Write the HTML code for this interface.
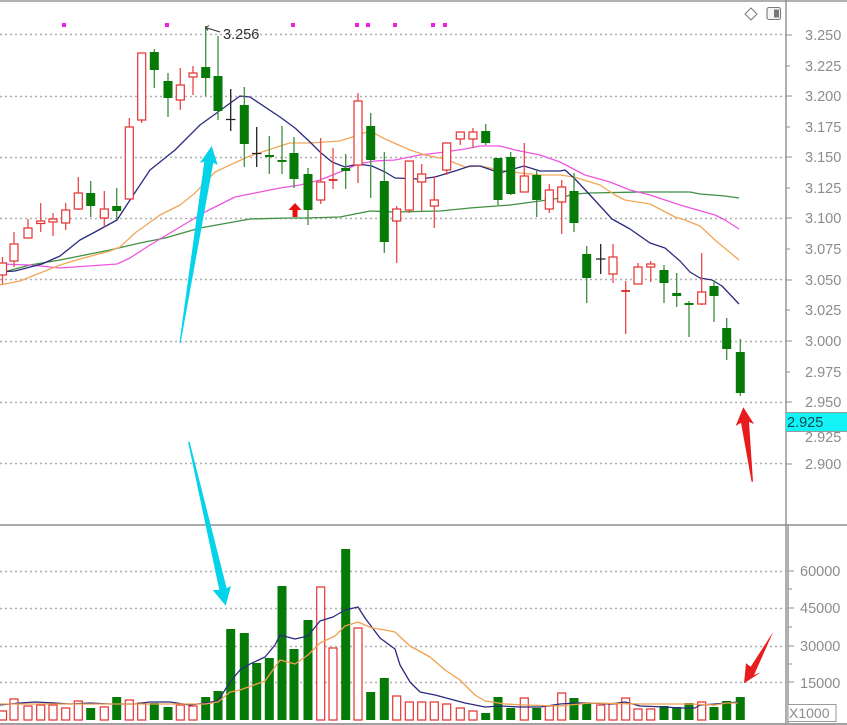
<!DOCTYPE html>
<html><head><meta charset="utf-8"><style>
html,body{margin:0;padding:0;background:#fff;width:847px;height:725px;overflow:hidden}
svg{display:block}
.b{filter:blur(.35px)}
text{font-family:"Liberation Sans",sans-serif}
.ax text{font-size:14.5px;fill:#8c8c8c}
</style></head><body>
<svg width="847" height="725" viewBox="0 0 847 725" xmlns="http://www.w3.org/2000/svg">
<rect width="847" height="725" fill="#fff"/>
<!-- grid -->
<g stroke="#aeaeae" stroke-width="1.4" stroke-dasharray="2 3" fill="none">
<path d="M0 34.5H786M0 96.5H786M0 157.5H786M0 218.5H786M0 279.5H786M0 341.5H786M0 402.5H786M0 463.5H786M0 571.5H786M0 608.5H786M0 646.5H786M0 682.5H786"/>
</g>
<g class="b">
<rect x="0" y="0" width="847" height="2" fill="#b0b0b0"/>
<!-- price MAs -->
<g fill="none" stroke-width="1.3" stroke-linejoin="round">
<polyline stroke="#3f9140" points="0,273 30,265 60,260 90,254 110,250 140,243 165,238 200,228 250,219 290,218 305,218 340,217 370,211 395,212 440,211 470,208 510,205 540,201 560,198 574,194 590,193 640,192 690,192 700,194 725,196 739,198"/>
<polyline stroke="#ee55e0" points="0,264 30,265 60,268 117,264 130,258 150,245 175,230 205,212 235,197 255,193 280,188 300,185 320,180 345,170 358,164 375,161 395,160 420,155 445,152 465,149 480,146 500,146 515,150 540,155 560,162 585,175 610,182 630,190 650,195 680,205 715,215 725,220 739,229"/>
<polyline stroke="#f2a65a" points="0,285 20,281 40,273 60,265 80,259 110,251 120,247 135,233 160,215 180,205 195,193 215,172 230,165 250,156 280,146 290,143 310,143 340,141 355,136 370,131 385,139 410,150 425,155 445,159 465,167 480,166 500,170 520,173 540,175 560,175 574,177 600,185 615,195 625,200 650,204 675,217 685,220 700,226 715,240 739,260"/>
<polyline stroke="#2a2a80" points="0,272 15,271 42,264 60,256 80,240 95,232 117,220 130,200 150,170 175,150 200,125 218,112 240,96 250,97 280,117 295,128 310,142 320,152 332,162 345,167 358,164 372,166 385,172 395,178 420,179 435,177 455,171 470,166 480,166 500,173 510,170 524,166 540,171 560,171 565,170 574,178 590,195 612,219 630,229 650,243 665,248 680,261 690,272 700,278 712,280 722,286 739,304"/>
</g>
<!-- wicks -->
<path fill="none" stroke="#e84a4a" stroke-width="1.3" d="M2.5 257V284M14 232V267M28 219V238M40.7 203V232M53 213V236M65.7 203V230M78.3 177V210M104.3 191V227M129.3 118V199M141.7 53V123M180.3 68V110M193 66V95M320.7 138V204M333 148V189M358 93V183M396.7 206V263M409.3 161V213M421.7 164V211M434.3 176V228M446.7 143V175M460.3 132V145M473 128V148M524.3 143V192M549.3 184V213M561.7 180V234M613 244V283M625.7 281V334M638 263V284M650.7 261V282M701.7 253V305"/>
<path fill="none" stroke="#3d8f3d" stroke-width="1.3" d="M90.7 181V217M116.7 188V220M154.3 49V88M168 73V117M205.7 26V96M218 36V120M244.3 87V167M269.3 136V174M282 126V174M294 137V188M308 168V225M345.7 154V189M370.7 113V198M384.3 152V253M485.7 124V145M498 158V205M510.7 152V195M536.7 169V217M574 173V232M586.7 246V303M664 265V303M676.7 273V307M689 301V337M714 280V322M726.7 318V360M740.3 339V396"/>
<path fill="none" stroke="#222" stroke-width="1.3" d="M230.7 89V131M226 119.5H235.5M256.7 127V167M252 153.5H261.5M600.7 244V274M596 259H605.5"/>
<path fill="none" stroke="#e02020" stroke-width="1.8" d="M328.7 180H337.5M621.3 291H630"/>
<path fill="none" stroke="#0a7a0a" stroke-width="2" d="M265 156H274M277.5 161H286.5"/>
<!-- bodies -->
<path fill="#fff" stroke="#e53434" stroke-width="1.2" d="M-1.5 263h8v12h-8zM10 244h8v17h-8zM24 228h8v10h-8zM36.7 221h8v2.5h-8zM49 219h8v3h-8zM61.7 210h8v13h-8zM74.3 193h8v16h-8zM100.3 209h8v9h-8zM125.3 127h8v72h-8zM137.7 53h8v67h-8zM176.3 85h8v15h-8zM189 73h8v4h-8zM316.7 182h8v18h-8zM354 101h8v64h-8zM392.7 209h8v12h-8zM405.3 161h8v49h-8zM417.7 174h8v8h-8zM430.3 200h8v6h-8zM442.7 143h8v27h-8zM456.3 132h8v7h-8zM469 132h8v7h-8zM520.3 176h8v16h-8zM545.3 190h8v19h-8zM557.7 187h8v15h-8zM609 257h8v17h-8zM634 267h8v17h-8zM646.7 264h8v3h-8zM697.7 292h8v12h-8z"/>
<path fill="#067a06" d="M86.2 193h9v13h-9zM112.2 206h9v5h-9zM149.8 52h9v18h-9zM163.5 81h9v17h-9zM201.2 67h9v11h-9zM213.5 76h9v35h-9zM239.8 105h9v39h-9zM289.5 153h9v26h-9zM303.5 174h9v36h-9zM341.2 168h9v3h-9zM366.2 126h9v34h-9zM379.8 181h9v61h-9zM481.2 131h9v12h-9zM493.5 158h9v42h-9zM506.2 157h9v37h-9zM532.2 175h9v25h-9zM569.5 191h9v32h-9zM582.2 254h9v24h-9zM659.5 270h9v13h-9zM672.2 293h9v3h-9zM684.5 303h9v2h-9zM709.5 286h9v10h-9zM722.2 328h9v21h-9zM735.8 352h9v41h-9z"/>
<!-- magenta dots -->
<path fill="#f020e0" d="M62 23h4v4h-4zM165 23h4v4h-4zM291 23h4v4h-4zM355 23h4v4h-4zM366 23h4v4h-4zM393 23h4v4h-4zM431 23h4v4h-4zM443 23h4v4h-4z"/>
<!-- high label -->
<path fill="none" stroke="#333" stroke-width="1" d="M205.5 27.5L220 32M205.5 27.5l3.5-2M205.5 27.5l2.5 3"/>
<text x="223" y="39" font-size="14.5" fill="#333">3.256</text>
<!-- red up arrow -->
<path fill="#e81010" d="M295 203L301.5 210H297.5V217H292.5V210H288.5Z"/>
<!-- volume bars -->
<path fill="#fff" stroke="#e53434" stroke-width="1.2" d="M-1.5 711h8v9h-8zM10 699h8v21h-8zM24 706h8v14h-8zM36.7 705h8v15h-8zM49 705h8v15h-8zM61.7 708h8v12h-8zM74.3 701h8v19h-8zM100.3 707h8v13h-8zM125.3 700h8v20h-8zM137.7 703h8v17h-8zM176.3 705h8v15h-8zM189 706h8v14h-8zM316.7 587h8v133h-8zM329 648h8v72h-8zM354 628h8v92h-8zM392.7 696h8v24h-8zM405.3 702h8v18h-8zM417.7 702h8v18h-8zM430.3 702h8v18h-8zM442.7 704h8v16h-8zM456.3 708h8v12h-8zM469 711h8v9h-8zM520.3 698h8v22h-8zM545.3 706h8v14h-8zM557.7 693h8v27h-8zM596.7 705h8v15h-8zM609 704h8v16h-8zM621.7 698h8v22h-8zM634 709h8v11h-8zM646.7 709h8v11h-8zM697.7 702h8v18h-8z"/>
<path fill="#067a06" d="M86.2 708h9v12h-9zM112.2 697h9v23h-9zM149.8 703h9v17h-9zM163.5 707h9v13h-9zM201.2 697h9v23h-9zM213.5 691h9v29h-9zM226.2 629h9v91h-9zM239.8 633h9v87h-9zM252.2 663h9v57h-9zM264.8 658h9v62h-9zM277.5 586h9v134h-9zM289.5 649h9v71h-9zM303.5 620h9v100h-9zM341.2 549h9v171h-9zM366.2 692h9v28h-9zM379.8 678h9v42h-9zM481.2 713h9v7h-9zM493.5 697h9v23h-9zM506.2 708h9v12h-9zM532.2 708h9v12h-9zM569.5 698h9v22h-9zM582.2 703h9v17h-9zM659.5 706h9v14h-9zM672.2 707h9v13h-9zM684.5 703h9v17h-9zM709.5 707h9v13h-9zM722.2 701h9v19h-9zM735.8 697h9v23h-9z"/>
<!-- volume MAs -->
<g fill="none" stroke-width="1.3" stroke-linejoin="round">
<polyline stroke="#2a2a80" points="0,705 20,703 35,702 55,703 70,704 90,703 110,704 135,704 150,702 170,702 190,705 205,703 218,701 230,682 240,670 250,664 265,657 275,645 280,635 295,639 308,636 320,621 333,617 345,610 358,607 365,618 380,638 395,649 400,665 410,682 420,692 435,695 450,699 465,703 485,707 500,706 520,707 540,707 560,704 575,703 590,703 610,704 625,702 640,706 665,707 680,708 695,708 700,705 715,704 727,703 738,702"/>
<polyline stroke="#f0a050" points="0,704 205,704 218,702 230,692 240,690 265,681 280,660 295,664 308,655 320,643 335,636 345,626 358,622 372,628 385,630 395,632 410,646 430,657 445,670 460,680 475,695 485,701 505,704 525,705 560,706 590,703 640,704 690,704 715,705 727,703 738,703"/>
</g>
<!-- frame -->
<path fill="none" stroke="#8f8f8f" stroke-width="1.4" d="M786 0V725M0 525H847M788 525V725"/>
<rect x="0" y="723" width="847" height="2" fill="#a0a0a0"/>
<!-- arrows -->
<path fill="#05d3ea" d="M211.7 146L217.7 165L213.3 162.7L180.6 343L179.4 343L204.3 161.7L200 162.7Z"/>
<path fill="#05d3ea" d="M225.7 605.7L212.7 590L219.3 590L188 441.7L189.6 441.7L226.7 588.3L231 586Z"/>
<path fill="#e81c1c" d="M743.3 407.3L754 424L749 422L753 481.7L751.6 481.7L741 422.7L735.7 426Z"/>
<path fill="#e81c1c" d="M744 683.3L746 663.3L750.7 666.7L773.3 631.7L754 675L761 672.3Z"/>
<!-- ticks -->
<path fill="none" stroke="#8f8f8f" stroke-width="1" d="M786 35H792M786 66H790M786 96H792M786 127H790M786 157H792M786 188H790M786 218H792M786 249H790M786 280H792M786 310H790M786 341H792M786 372H790M786 402H792M786 464H792M788 571H794M788 589H792M788 608H794M788 627H792M788 646H794M788 664H792M788 682H794"/>
<!-- axis labels -->
<g class="ax">
<text x="805" y="40">3.250</text><text x="805" y="71">3.225</text><text x="805" y="101">3.200</text><text x="805" y="132">3.175</text><text x="805" y="162">3.150</text><text x="805" y="193">3.125</text><text x="805" y="223">3.100</text><text x="805" y="254">3.075</text><text x="805" y="285">3.050</text><text x="805" y="315">3.025</text><text x="805" y="346">3.000</text><text x="805" y="377">2.975</text><text x="805" y="407">2.950</text><text x="805" y="442">2.925</text><text x="805" y="469">2.900</text>
<text x="800" y="576">60000</text><text x="800" y="613">45000</text><text x="800" y="651">30000</text><text x="800" y="688">15000</text>
</g>
<!-- current price -->
<rect x="786" y="412" width="61" height="20" fill="#13f3f6"/>
<path fill="none" stroke="#9a9a9a" d="M786 412.5H847M786 431.5H847"/>
<text x="787" y="427" font-size="14.5" fill="#0a4a50">2.925</text>
<!-- X1000 -->
<rect x="788" y="704.5" width="48" height="17" fill="#fff" stroke="#9a9a9a" stroke-width="1"/>
<text x="789" y="718" font-size="14" fill="#8c8c8c">X1000</text>
<!-- top icons -->
<path fill="#fff" stroke="#777" stroke-width="1" d="M751 8L757 14L751 20L745 14Z"/>
<rect x="767" y="7.5" width="13.5" height="12" rx="2" fill="#f4f4f4" stroke="#777" stroke-width="1.1"/>
<rect x="774" y="9.5" width="5" height="8" fill="#777"/>
</g>
</svg>
</body></html>
